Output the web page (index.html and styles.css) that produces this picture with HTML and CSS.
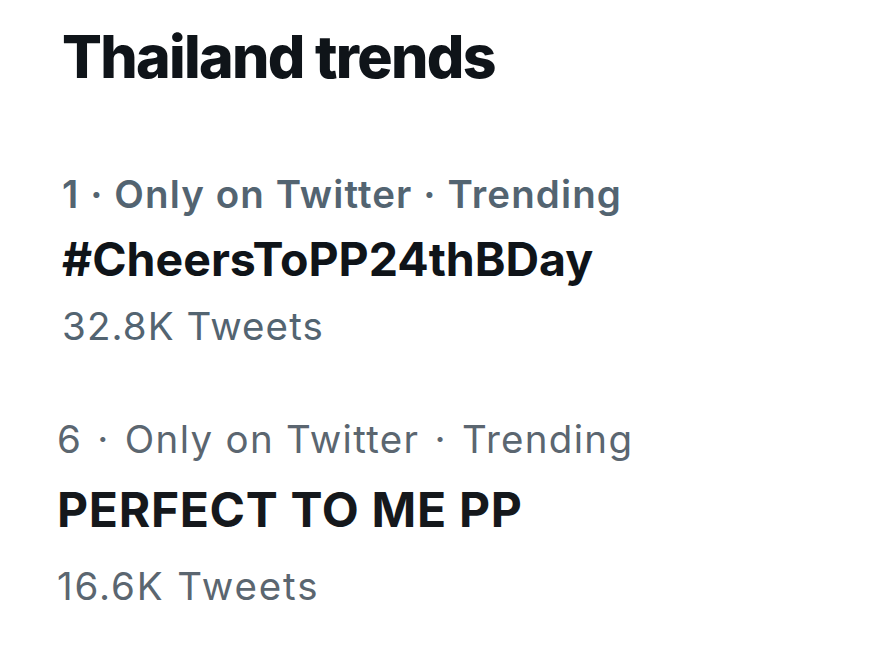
FILE: index.html
```html
<!DOCTYPE html>
<html lang="en">
<head>
<meta charset="utf-8">
<title>Thailand trends</title>
<link rel="stylesheet" href="styles.css">
</head>
<body>
<main class="panel">
  <h1 class="heading">Thailand trends</h1>
  <section class="trend trend-first">
    <div class="meta">1 · Only on Twitter · Trending</div>
    <div class="title">#CheersToPP24thBDay</div>
    <div class="count">32.8K Tweets</div>
  </section>
  <section class="trend trend-second">
    <div class="meta">6 <span class="dot">·</span> Only on Twitter <span class="dot">·</span> Trending</div>
    <div class="title">PERFECT TO ME PP</div>
    <div class="count">16.6K Tweets</div>
  </section>
</main>
</body>
</html>
```
FILE: styles.css
```css
html, body {
  margin: 0;
  padding: 0;
  background: #ffffff;
}

.panel {
  width: 869px;
  height: 662px;
  box-sizing: border-box;
  padding: 22px 0 0 62px;
  display: flex;
  flex-direction: column;
  font-family: Inter, "Noto Sans", sans-serif;
}

.heading {
  margin: 0;
  font-weight: 800;
  font-size: 59px;
  line-height: 1.2;
  letter-spacing: -1.7px;
  color: #0f1419;
}

.trend {
  display: flex;
  flex-direction: column;
}

.trend-first {
  margin-top: 78px;
}

.trend-first .meta {
  font-weight: 600;
  font-size: 38.5px;
  line-height: 1.2;
  letter-spacing: 1.1px;
  color: #536471;
}

.trend-first .title {
  margin-top: 15px;
  font-weight: 700;
  font-size: 46.5px;
  line-height: 1.2;
  color: #0f1419;
}

.trend-first .count {
  margin-top: 15px;
  font-weight: 400;
  font-size: 38.5px;
  line-height: 1.2;
  letter-spacing: 1.1px;
  color: #536471;
}

.trend-second {
  margin-top: 67px;
  margin-left: -5px;
}

.trend-second .meta {
  font-weight: 400;
  font-size: 38.5px;
  line-height: 1.2;
  letter-spacing: 1.3px;
  color: #5b6670;
}

.trend-second .dot {
  margin: 0 3px;
}

.trend-second .title {
  margin-top: 19px;
  font-weight: 700;
  font-size: 48px;
  line-height: 1.2;
  letter-spacing: 0.7px;
  color: #15181c;
}

.trend-second .count {
  margin-top: 24px;
  font-weight: 400;
  font-size: 38.5px;
  line-height: 1.2;
  letter-spacing: 1.9px;
  color: #5b6670;
}
```
